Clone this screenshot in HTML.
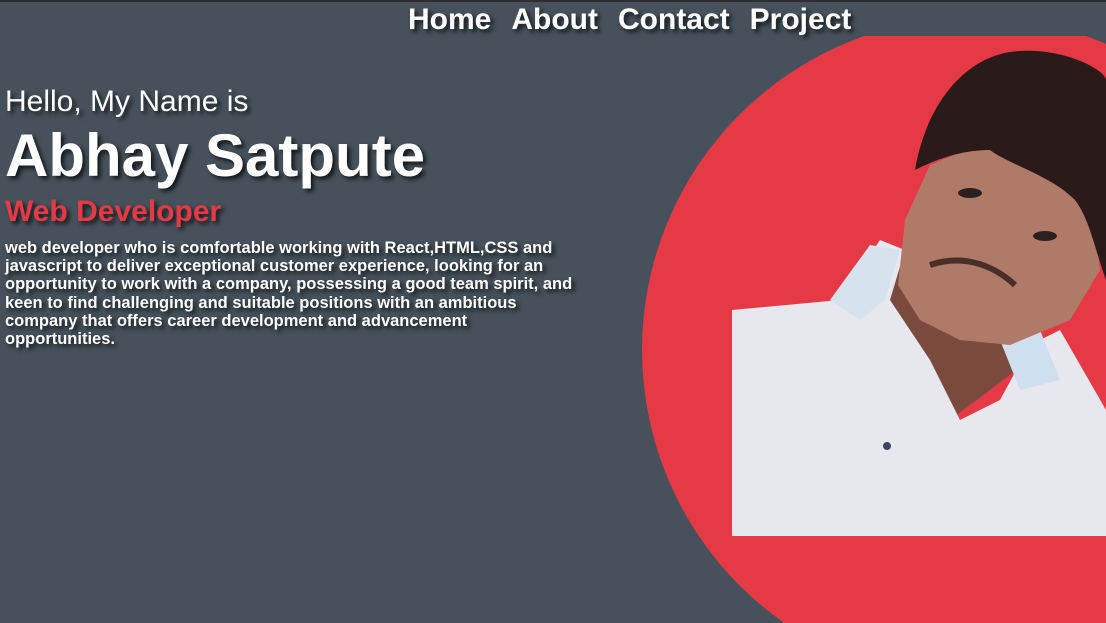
<!DOCTYPE html>
<html><head><meta charset="utf-8"><style>
html,body{margin:0;padding:0;overflow:hidden;width:1106px;height:623px}
body{background:#46515b;position:relative;font-family:"Liberation Sans",Arial,sans-serif;color:#fff}
.top{position:absolute;left:0;top:0;width:1106px;height:2px;background:#2e2e2e}
.sh{text-shadow:3px 3px 4px rgba(0,0,0,.7)}
nav{position:absolute;top:3px;left:408px;font-weight:bold;font-size:30px;white-space:nowrap}
nav span{margin-right:20px}
.t{position:absolute;left:5px;white-space:nowrap}
p{position:absolute;left:5px;top:239px;width:576px;margin:0;font-weight:bold;font-size:16.5px;line-height:18.2px}
svg{position:absolute;left:0;top:0}
</style></head><body>
<div class="top"></div>
<svg width="1106" height="623" viewBox="0 0 1106 623">
<defs><clipPath id="c"><rect x="0" y="36" width="1106" height="600"/></clipPath></defs>
<circle cx="975" cy="350" r="333" fill="#e63946" clip-path="url(#c)"/>
<polygon points="880,250 1010,320 1030,360 950,420 900,360" fill="#7a4a3c"/>
<polygon points="732,310 840,300 880,240 905,250 890,300 930,360 960,420 1000,400 1030,345 1060,330 1106,410 1106,536 732,536" fill="#e6e8ee"/>
<polygon points="870,245 900,250 885,300 860,320 830,300" fill="#d6e2ee"/>
<polygon points="1000,340 1040,330 1060,380 1020,390" fill="#cfdfef"/>
<polygon points="930,165 990,140 1060,175 1095,225 1100,270 1070,320 1010,345 960,340 920,320 898,285 905,220" fill="#b07a68"/>
<path d="M915,170 C925,110 960,60 1010,52 C1060,45 1106,70 1106,80 L1106,280 C1095,250 1090,220 1075,200 C1050,175 1010,165 990,150 C960,150 935,160 915,170 Z" fill="#2a1a1a"/>
<ellipse cx="970" cy="193" rx="12" ry="5" fill="#2b2020"/>
<ellipse cx="1045" cy="236" rx="12" ry="5" fill="#2b2020"/>
<path d="M930,265 C960,255 990,262 1015,285" stroke="#4a2e28" stroke-width="6" fill="none"/>
<circle cx="887" cy="446" r="4" fill="#3a4560"/>
</svg>
<nav class="sh"><span>Home</span><span>About</span><span>Contact</span><span>Project</span></nav>
<div class="t sh" style="top:85px;font-size:30px">Hello, My Name is</div>
<div class="t sh" style="top:121px;font-size:60px;font-weight:bold">Abhay Satpute</div>
<div class="t sh" style="top:195px;font-size:30px;font-weight:bold;color:#e63946">Web Developer</div>
<p class="sh">web developer who is comfortable working with React,HTML,CSS and javascript to deliver exceptional customer experience, looking for an opportunity to work with a company, possessing a good team spirit, and keen to find challenging and suitable positions with an ambitious company that offers career development and advancement opportunities.</p>
</body></html>
